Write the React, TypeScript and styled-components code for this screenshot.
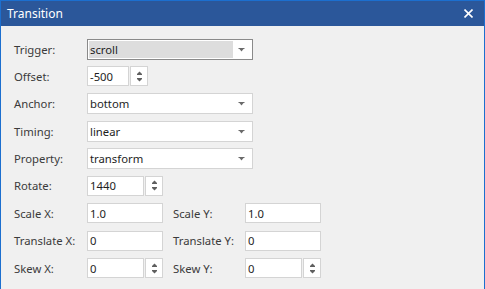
import React from "react";
import styled, { createGlobalStyle } from "styled-components";

const GlobalStyle = createGlobalStyle`
  html, body {
    margin: 0;
    padding: 0;
    background: #f0f0f0;
  }
  * {
    box-sizing: border-box;
  }
`;

const Window = styled.div`
  width: 485px;
  height: 289px;
  border: 1px solid #1c6fcf;
  border-bottom: none;
  background-color: #f0f0f0;
  font-family: "Noto Sans", "Open Sans", sans-serif;
  font-size: 11.3px;
  overflow: hidden;
  display: flex;
  flex-direction: column;
`;

const TitleBar = styled.div`
  height: 25px;
  background-color: #2b579a;
  color: #fff;
  display: flex;
  align-items: center;
  justify-content: space-between;
  padding: 0 11px 0 6px;
  font-size: 12px;
  flex-shrink: 0;
`;

const CloseButton = styled.div`
  width: 10px;
  height: 10px;
  display: flex;
  align-items: center;
  justify-content: center;
`;

const Form = styled.div`
  padding: 13px 0 0 13px;
  display: flex;
  flex-direction: column;
  gap: 7.4px;
`;

const Row = styled.div`
  display: flex;
  align-items: center;
  height: 20px;
`;

const Label = styled.span<{ $width: number; $gap?: number }>`
  width: ${(p) => p.$width}px;
  margin-left: ${(p) => p.$gap ?? 0}px;
  color: #3b3b3b;
  white-space: nowrap;
  flex-shrink: 0;
`;

const ComboBox = styled.div<{ $active?: boolean }>`
  width: 166px;
  height: 21px;
  display: flex;
  align-items: stretch;
  background: #fff;
  border: 1px solid ${(p) => (p.$active ? "#8a8a8a" : "#d4d4d4")};
  padding: ${(p) => (p.$active ? "1px 0 1px 1px" : "0")};
`;

const ComboValue = styled.div<{ $active?: boolean }>`
  flex: 1;
  display: flex;
  align-items: center;
  padding-left: ${(p) => (p.$active ? "1px" : "2px")};
  background: ${(p) => (p.$active ? "#dddddd" : "transparent")};
  color: #1e1e1e;
`;

const ComboArrow = styled.div`
  width: 19px;
  display: flex;
  align-items: center;
  justify-content: center;
  padding: 1px 3px 0 0;
`;

const TextBox = styled.div<{ $width: number }>`
  width: ${(p) => p.$width}px;
  height: 20px;
  background: #fff;
  border: 1px solid #d4d4d4;
  display: flex;
  align-items: center;
  padding-left: 2px;
  color: #1e1e1e;
  flex-shrink: 0;
`;

const SpinBox = styled.div`
  display: flex;
  gap: 1px;
`;

const SpinButtons = styled.div`
  width: 18px;
  height: 20px;
  background: #fff;
  border: 1px solid #d4d4d4;
  display: flex;
  flex-direction: column;
  align-items: center;
  justify-content: center;
  gap: 3px;
`;

const DownArrow = () => (
  <svg width="7" height="4" viewBox="0 0 7 4">
    <rect x="0.5" y="0" width="6" height="1" fill="#6a6a6a" />
    <polygon points="1.5,1 5.5,1 3.5,3.5" fill="#6a6a6a" />
  </svg>
);

const SpinUp = () => (
  <svg width="7" height="4" viewBox="0 0 7 4">
    <polygon points="1,3 6,3 3.5,0.5" fill="#5f5f5f" />
    <rect x="1" y="3" width="5" height="1" fill="#5f5f5f" />
  </svg>
);

const SpinDown = () => (
  <svg width="7" height="4" viewBox="0 0 7 4">
    <rect x="1" y="0" width="5" height="1" fill="#5f5f5f" />
    <polygon points="1,1 6,1 3.5,3.5" fill="#5f5f5f" />
  </svg>
);

const Combo: React.FC<{ value: string; active?: boolean }> = ({ value, active }) => (
  <ComboBox $active={active}>
    <ComboValue $active={active}>{value}</ComboValue>
    <ComboArrow>
      <DownArrow />
    </ComboArrow>
  </ComboBox>
);

const Spinner: React.FC<{ value: string; width: number }> = ({ value, width }) => (
  <SpinBox>
    <TextBox $width={width}>{value}</TextBox>
    <SpinButtons>
      <SpinUp />
      <SpinDown />
    </SpinButtons>
  </SpinBox>
);

const App: React.FC = () => {
  return (
    <Window>
      <GlobalStyle />
      <TitleBar>
        <span>Transition</span>
        <CloseButton>
          <svg width="9" height="9" viewBox="0 0 9 9">
            <path d="M0.5 0.5L8.5 8.5M8.5 0.5L0.5 8.5" stroke="#fff" strokeWidth="1.6" />
          </svg>
        </CloseButton>
      </TitleBar>
      <Form>
        <Row>
          <Label $width={73}>Trigger:</Label>
          <Combo value="scroll" active />
        </Row>
        <Row>
          <Label $width={73}>Offset:</Label>
          <Spinner value="-500" width={42} />
        </Row>
        <Row>
          <Label $width={73}>Anchor:</Label>
          <Combo value="bottom" />
        </Row>
        <Row>
          <Label $width={73}>Timing:</Label>
          <Combo value="linear" />
        </Row>
        <Row>
          <Label $width={73}>Property:</Label>
          <Combo value="transform" />
        </Row>
        <Row>
          <Label $width={73}>Rotate:</Label>
          <Spinner value="1440" width={57} />
        </Row>
        <Row>
          <Label $width={73}>Scale X:</Label>
          <TextBox $width={76}>1.0</TextBox>
          <Label $width={72} $gap={10}>Scale Y:</Label>
          <TextBox $width={76}>1.0</TextBox>
        </Row>
        <Row>
          <Label $width={73}>Translate X:</Label>
          <TextBox $width={76}>0</TextBox>
          <Label $width={72} $gap={10}>Translate Y:</Label>
          <TextBox $width={76}>0</TextBox>
        </Row>
        <Row>
          <Label $width={73}>Skew X:</Label>
          <Spinner value="0" width={57} />
          <Label $width={72} $gap={10}>Skew Y:</Label>
          <Spinner value="0" width={57} />
        </Row>
      </Form>
    </Window>
  );
};

export default App;
